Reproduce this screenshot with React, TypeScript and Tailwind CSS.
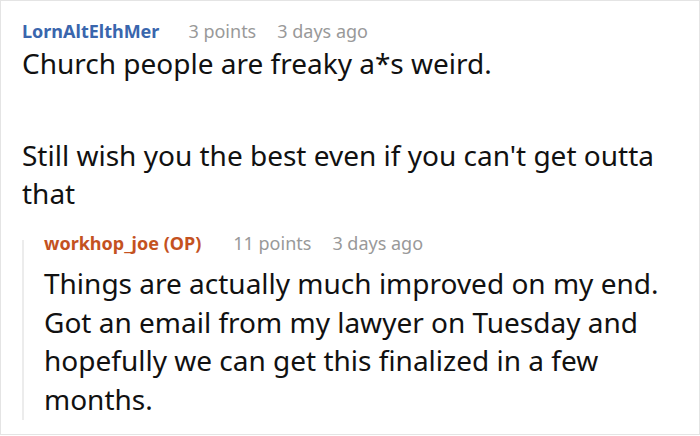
export default function App() {
  return (
    <div
      className="w-[700px] h-[436px] bg-white overflow-hidden"
      style={{ fontFamily: '"Noto Sans", sans-serif' }}
    >
      <div className="h-[435px] border border-[#e4e4e4] pl-[21px] pr-2 pt-[17px]">
        <div className="flex items-baseline text-[18px] leading-[26px]">
          <span className="font-bold text-[#3a66ad]">LornAltElthMer</span>
          <span className="ml-[29px] text-[#999]">3 points</span>
          <span className="ml-[21px] text-[#999]">3 days ago</span>
        </div>
        <div className="text-[28px] leading-[38px] text-[#111]">
          <p>Church people are freaky a*s weird.</p>
          <p className="mt-[54px]">Still wish you the best even if you can't get outta that</p>
        </div>
        <div className="mt-[18px] flex">
          <div className="w-[2px] mt-[10px] mb-[-2px] bg-[#ececec] shrink-0" />
          <div className="pl-[20px]">
            <div className="flex items-baseline text-[18px] leading-[26px]">
              <span className="font-bold text-[#c4521f]">workhop_joe (OP)</span>
              <span className="ml-[32px] text-[#999]">11 points</span>
              <span className="ml-[21px] text-[#999]">3 days ago</span>
            </div>
            <p className="mt-[8px] text-[28px] leading-[38.5px] text-[#111]">
              Things are actually much improved on my end. Got an email from my lawyer on Tuesday and hopefully we can get this finalized in a few months.
            </p>
          </div>
        </div>
      </div>
    </div>
  );
}
